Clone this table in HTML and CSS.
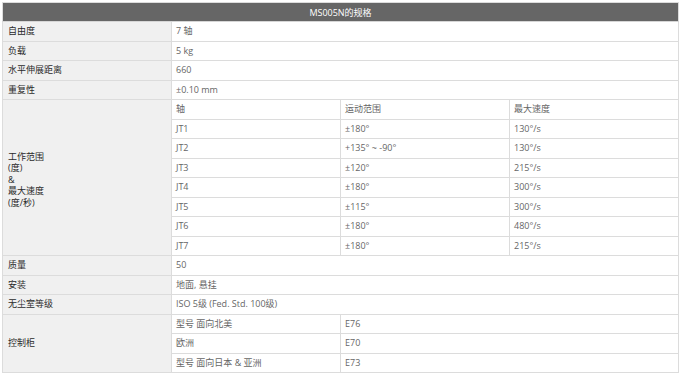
FILE: index.html
```html
<!DOCTYPE html>
<html lang="zh">
<head>
<meta charset="utf-8">
<title>MS005N的规格</title>
<link rel="stylesheet" href="styles.css">
</head>
<body>
<table class="spec">
  <colgroup>
    <col class="c1"><col class="c2"><col class="c3"><col class="c4">
  </colgroup>
  <thead>
    <tr class="head-row"><th colspan="4">MS005N的规格</th></tr>
  </thead>
  <tbody>
    <tr><td class="lbl">自由度</td><td colspan="3">7 轴</td></tr>
    <tr><td class="lbl">负载</td><td colspan="3">5 kg</td></tr>
    <tr><td class="lbl">水平伸展距离</td><td colspan="3">660</td></tr>
    <tr><td class="lbl">重复性</td><td colspan="3">±0.10 mm</td></tr>
    <tr><td class="lbl multi" rowspan="8">工作范围<br>(度)<br>&amp;<br>最大速度<br>(度/秒)</td><td>轴</td><td>运动范围</td><td>最大速度</td></tr>
    <tr><td>JT1</td><td>±180°</td><td>130°/s</td></tr>
    <tr><td>JT2</td><td>+135° ~ -90°</td><td>130°/s</td></tr>
    <tr><td>JT3</td><td>±120°</td><td>215°/s</td></tr>
    <tr><td>JT4</td><td>±180°</td><td>300°/s</td></tr>
    <tr><td>JT5</td><td>±115°</td><td>300°/s</td></tr>
    <tr><td>JT6</td><td>±180°</td><td>480°/s</td></tr>
    <tr><td>JT7</td><td>±180°</td><td>215°/s</td></tr>
    <tr><td class="lbl">质量</td><td colspan="3">50</td></tr>
    <tr><td class="lbl">安装</td><td colspan="3">地面, 悬挂</td></tr>
    <tr><td class="lbl">无尘室等级</td><td colspan="3">ISO 5级 (Fed. Std. 100级)</td></tr>
    <tr><td class="lbl" rowspan="3">控制柜</td><td>型号 面向北美</td><td colspan="2">E76</td></tr>
    <tr><td>欧洲</td><td colspan="2">E70</td></tr>
    <tr><td>型号 面向日本 &amp; 亚洲</td><td colspan="2">E73</td></tr>
  </tbody>
</table>
</body>
</html>
```
FILE: styles.css
```css
html, body {
  margin: 0;
  padding: 0;
  background: #ffffff;
}
body {
  padding: 2px 2px 0 2px;
  font-family: "Open Sans", "Noto Sans CJK SC", sans-serif;
  font-size: 9px;
  color: #666666;
}
.spec {
  width: 676px;
  table-layout: fixed;
  border-collapse: collapse;
  border: 1px solid #dcdcdc;
}
.c1, .c2, .c3, .c4 { width: 169px; }
.head-row { height: 19px; }
.head-row th {
  background: #666666;
  color: #ffffff;
  font-weight: normal;
  text-align: center;
  padding: 0;
  border: 1px solid #dcdcdc;
  border-bottom-color: #d6d6d6;
}
.spec tbody tr { height: 19.5px; }
.spec td {
  padding: 0 4px;
  border: 1px solid #dcdcdc;
  line-height: 12px;
  vertical-align: middle;
  white-space: nowrap;
  text-align: left;
}
.spec td.lbl {
  background: #f0f0f0;
  color: #2a2a2a;
  padding-left: 5px;
}
.spec td.multi {
  line-height: 11.5px;
  padding-top: 4px;
}
```
